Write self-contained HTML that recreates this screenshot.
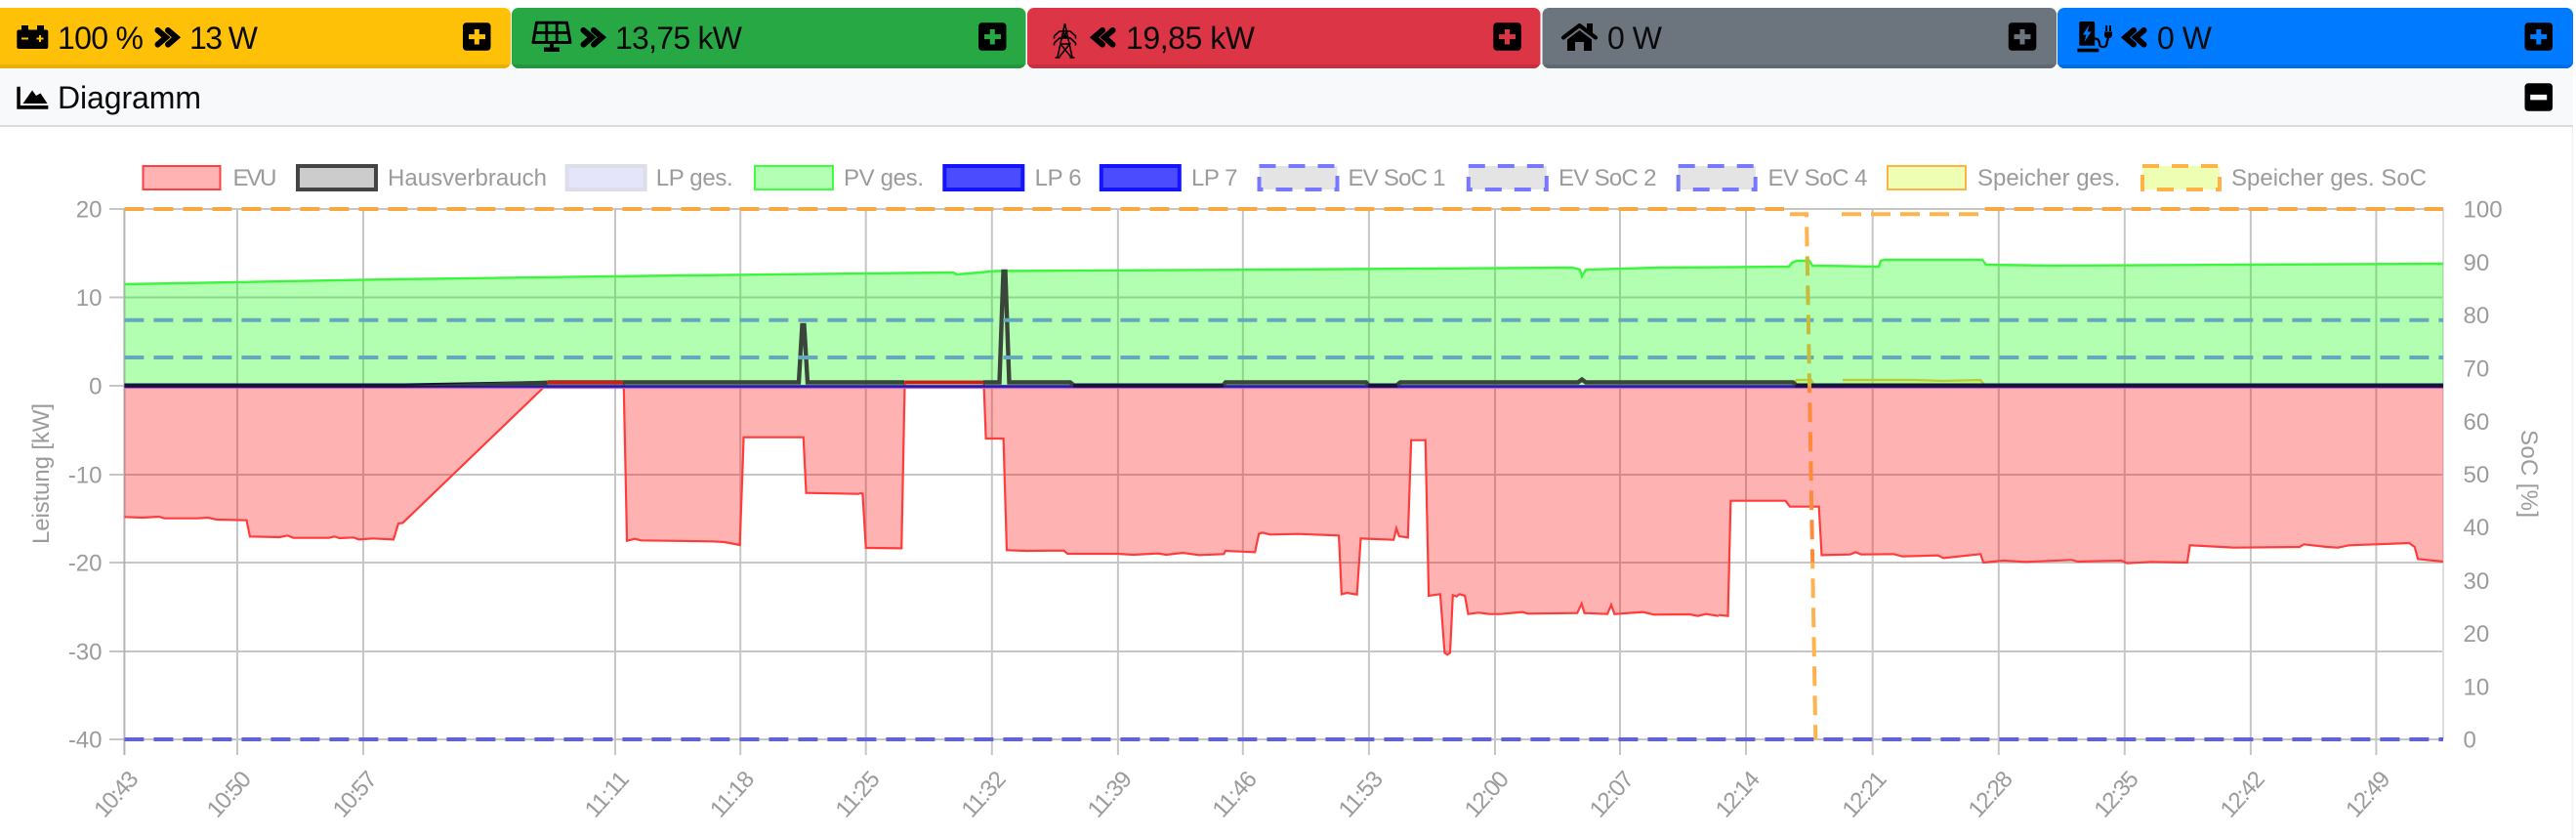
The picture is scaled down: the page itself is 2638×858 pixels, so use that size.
<!DOCTYPE html>
<html lang="de"><head><meta charset="utf-8"><title>Diagramm</title>
<style>
html,body{margin:0;padding:0;background:#fff;width:2638px;height:858px;overflow:hidden}
svg{display:block}
text{font-family:"Liberation Sans",Arial,sans-serif}
.h{font-size:32px;fill:#0a0a0a}
.l{font-size:24px;fill:#9b9b9b}
.ns{vector-effect:non-scaling-stroke}
</style></head><body>
<svg xmlns="http://www.w3.org/2000/svg" width="2638" height="858" viewBox="0 0 2638 858">
<!-- header cards -->
<rect x="0" y="70" width="2635" height="60" fill="#f8f9fa"/>
<rect x="0" y="128" width="2635" height="2" fill="#dcdcdc"/>
<rect x="2633.5" y="130" width="1.5" height="728" fill="#f0f0f0"/>
<rect x="-8" y="8" width="531" height="62" rx="7" fill="#ffc107"/>
<path d="M-8,66H523V63a7,7 0 0 1-7,7H0z" fill="#e8b006"/>
<rect x="524" y="8" width="526.5" height="62" rx="7" fill="#28a745"/>
<path d="M524,63V66H1050.5V63a7,7 0 0 1-7,7H531a7,7 0 0 1-7-7z" fill="#24963e"/>
<rect x="1052" y="8" width="525.5" height="62" rx="7" fill="#dc3545"/>
<path d="M1052,63V66H1577.5V63a7,7 0 0 1-7,7H1059a7,7 0 0 1-7-7z" fill="#c6303e"/>
<rect x="1579.5" y="8" width="526.5" height="62" rx="7" fill="#6c757d"/>
<path d="M1579.5,63V66H2106V63a7,7 0 0 1-7,7H1586.5a7,7 0 0 1-7-7z" fill="#616970"/>
<rect x="2107" y="8" width="528" height="62" rx="7" fill="#007bff"/>
<path d="M2107,63V66H2635V63a7,7 0 0 1-7,7H2114a7,7 0 0 1-7-7z" fill="#006fe6"/>

<!-- plus / minus buttons -->
<rect x="474" y="23.3" width="28.5" height="28.5" rx="3.5" fill="#000"/><path d="M480,37.6H497M488.3,30V45.5" stroke="#ffc107" stroke-width="5"/>
<rect x="1002" y="23.3" width="28.5" height="28.5" rx="3.5" fill="#000"/><path d="M1008,37.6H1025M1016.3,30V45.5" stroke="#28a745" stroke-width="5"/>
<rect x="1529.3" y="23.3" width="28.5" height="28.5" rx="3.5" fill="#000"/><path d="M1535,37.6H1552M1543.5,30V45.5" stroke="#dc3545" stroke-width="5"/>
<rect x="2056.8" y="23.3" width="28.5" height="28.5" rx="3.5" fill="#000"/><path d="M2062.5,37.6H2079.5M2071,30V45.5" stroke="#6c757d" stroke-width="5"/>
<rect x="2585.5" y="23.3" width="28.5" height="28.5" rx="3.5" fill="#000"/><path d="M2591.2,37.6H2608.2M2599.8,30V45.5" stroke="#007bff" stroke-width="5"/>
<rect x="2585.5" y="85.3" width="28.5" height="28.5" rx="3.5" fill="#000"/><path d="M2591.2,99.6H2608.2" stroke="#f8f9fa" stroke-width="5.5"/>

<!-- battery -->
<path d="M22,26h7v4.5h-7zM38,26h7v4.5h-7z" fill="#000"/><rect x="17.3" y="30.5" width="32" height="19.5" rx="2" fill="#000"/>
<path d="M22,39.5h7M37.5,39.5h7M41,36v7" stroke="#ffc107" stroke-width="2"/>
<text class="h" x="59" y="50" textLength="88">100 %</text>
<path d="M161.5,31L170,38.3L161.5,45.6M172,31L180.5,38.3L172,45.6" fill="none" stroke="#000" stroke-width="6" stroke-linecap="round" stroke-linejoin="miter"/>
<text class="h" x="194" y="50" textLength="70">13 W</text>

<!-- solar -->
<path d="M549.5,23.3H580.5L584,43.5H546Z" fill="none" stroke="#000" stroke-width="3" stroke-linejoin="round"/>
<path d="M547.5,33.5H582.5M559.8,23V44M570.2,23V44" stroke="#000" stroke-width="2.8"/>
<path d="M563,44h4v5h-4zM557,48.5h16v4.5h-16z" fill="#000"/>
<path d="M597.5,31L606,38.3L597.5,45.6M608,31L616.5,38.3L608,45.6" fill="none" stroke="#000" stroke-width="6" stroke-linecap="round" stroke-linejoin="miter"/>
<text class="h" x="630" y="50" textLength="130">13,75 kW</text>

<!-- tower -->
<path d="M1090.5,24L1083,58.5M1090.5,24L1098,58.5M1079.5,37L1085,32H1096L1101.5,37V39.5M1079.5,37V39.5M1079.5,44L1085,39H1096L1101.5,44V46.5M1079.5,44V46.5M1086.5,37.5H1094.5M1086,45H1095.5L1085,58M1086,45L1096.5,58M1088,32L1093,39M1093,32L1088,39M1080.5,59H1085.5M1095.5,59H1100.5" fill="none" stroke="#000" stroke-width="1.6"/>
<path d="M1139.5,31L1131,38.3L1139.5,45.6M1129,31L1120.5,38.3L1129,45.6" fill="none" stroke="#000" stroke-width="6" stroke-linecap="round" stroke-linejoin="miter"/>
<text class="h" x="1153" y="50" textLength="132">19,85 kW</text>

<!-- home -->
<path d="M1601,38.5L1617.5,26L1634,38.5" fill="none" stroke="#000" stroke-width="4.2" stroke-linecap="round" stroke-linejoin="round"/>
<path d="M1625,24h6v10h-6z" fill="#000"/>
<path d="M1605,40.5L1617.5,31L1630,40.5V52H1622V43H1613V52H1605Z" fill="#000"/>
<text class="h" x="1646" y="50" textLength="56">0 W</text>

<!-- charging -->
<path d="M2131,22H2143.5a1.7,1.7 0 0 1 1.7,1.7V46.7H2129.3V23.7a1.7,1.7 0 0 1 1.7-1.7Z" fill="#000"/>
<path d="M2139.5,25.5L2133,35.5H2136.5L2134.5,43L2141.5,32.5H2137.8Z" fill="#007bff"/>
<rect x="2127.3" y="49.7" width="22" height="3.6" fill="#000"/>
<path d="M2145,39.5C2150,39.5 2150,44 2150,45C2150,49 2157.5,49.5 2157.5,44.5C2157.5,42 2159,41 2159,37" fill="none" stroke="#000" stroke-width="2.2"/>
<path d="M2155,32.5H2163V36a3,3 0 0 1-3,3H2158a3,3 0 0 1-3-3ZM2156.2,26h2v6h-2zM2160,26h2v6h-2z" fill="#000"/>
<path d="M2195.5,31L2187,38.3L2195.5,45.6M2185,31L2176.5,38.3L2185,45.6" fill="none" stroke="#000" stroke-width="6" stroke-linecap="round" stroke-linejoin="miter"/>
<text class="h" x="2209" y="50" textLength="56">0 W</text>

<!-- Diagramm title -->
<path d="M17.3,88.7H20.8V108H49.3V111.7H17.3Z" fill="#000"/>
<path d="M23.5,106L33,92.5L37,98L41.5,95.5L48.5,106Z" fill="#000"/>
<text class="h" x="59" y="111" textLength="147">Diagramm</text>

<!-- legend -->
<g stroke-width="2">
<rect x="146.5" y="170" width="79" height="24" fill="#ffb3b3" stroke="#ff4040"/>
<rect x="773" y="170" width="80" height="24" fill="#b3ffb3" stroke="#40ff40"/>
<rect x="1933" y="170" width="80" height="24" fill="#eeffb3" stroke="#ffb347"/>
</g>
<g stroke-width="4">
<rect x="305" y="170" width="80" height="24" fill="#cccccc" stroke="#444444"/>
<rect x="580.6" y="170" width="80" height="24" fill="#e4e4fb" stroke="#dddde9"/>
<rect x="967.3" y="170" width="80" height="24" fill="#4c4cff" stroke="#1414ff"/>
<rect x="1127.8" y="170" width="80" height="24" fill="#4c4cff" stroke="#1414ff"/>
<rect x="1289.5" y="170" width="80" height="24" fill="#e4e4e4" stroke="#7878ff" stroke-dasharray="17 13"/>
<rect x="1503.8" y="170" width="80" height="24" fill="#e4e4e4" stroke="#7878ff" stroke-dasharray="17 13"/>
<rect x="1718.7" y="170" width="79" height="24" fill="#e4e4e4" stroke="#7878ff" stroke-dasharray="17 13"/>
<rect x="2194" y="170" width="79" height="24" fill="#eeffb3" stroke="#ffb347" stroke-dasharray="17 13"/>
</g>
<g class="l">
<text class="l" x="238.5" y="190" textLength="45">EVU</text>
<text class="l" x="397" y="190" textLength="163">Hausverbrauch</text>
<text class="l" x="671.7" y="190" textLength="79">LP ges.</text>
<text class="l" x="864" y="190" textLength="82">PV ges.</text>
<text class="l" x="1059.6" y="190" textLength="48">LP 6</text>
<text class="l" x="1220" y="190" textLength="47.5">LP 7</text>
<text class="l" x="1380.5" y="190" textLength="100">EV SoC 1</text>
<text class="l" x="1596" y="190" textLength="100.5">EV SoC 2</text>
<text class="l" x="1810.5" y="190" textLength="102">EV SoC 4</text>
<text class="l" x="2025" y="190" textLength="146.5">Speicher ges.</text>
<text class="l" x="2285" y="190" textLength="200">Speicher ges. SoC</text>
</g>

<!-- grid -->
<g stroke="#c6c6c6" stroke-width="2" fill="none">
<path d="M112,214H2502M112,304.5H2502M112,395H2502M112,486H2502M112,576H2502M112,667H2502M112,757H2502"/>
<path d="M243,214V773M372,214V773M630,214V773M758.2,214V773M886.7,214V773M1015.8,214V773M1144.9,214V773M1272.8,214V773M1401.9,214V773M1531,214V773M1659,214V773M1788,214V773M1917.7,214V773M2046.8,214V773M2175.8,214V773M2304.9,214V773M2433.4,214V773"/>
</g>
<path d="M127.4,214V773" stroke="#b4b4b4" stroke-width="2"/>
<path d="M2502,214V757" stroke="#dedede" stroke-width="2"/>

<!-- PV -->
<path d="M127.4,395V291L400,286L700,282L976,279L980,281L1020,277.5L1300,276L1610,274L1618,276L1620,283L1624,276L1700,274L1832,273L1835,269L1840,267L1853,267L1856,272L1924,273L1926,267L1930,266L2030,266L2034,271L2100,272L2300,271L2502,270V395Z" fill="rgba(0,255,0,.3)"/>
<path d="M127.4,291L400,286L700,282L976,279L980,281L1020,277.5L1300,276L1610,274L1618,276L1620,283L1624,276L1700,274L1832,273L1835,269L1840,267L1853,267L1856,272L1924,273L1926,267L1930,266L2030,266L2034,271L2100,272L2300,271L2502,270" fill="none" stroke="#3cf53c" stroke-width="2.4"/>

<!-- EVU fill + line, points in zoom coords -->
<g transform="translate(0,360) scale(0.5612245,0.3333333)">
<path fill="rgba(255,0,0,.3)" d="M227,105L227,508L260,510L290,507L300,512L360,512L380,510L395,516L450,518L456,568L510,570L525,565L535,572L600,572L610,568L620,573L645,571L655,577L680,574L718,577L727,528L735,526L995,105ZM1138,105L1144,581L1158,575L1170,580L1300,583L1322,585L1350,594L1357,263L1466,263L1471,434L1568,437L1568,105Z"/>
<path class="ns" fill="none" stroke="#ff3c3c" stroke-width="2.2" d="M227,508L260,510L290,507L300,512L360,512L380,510L395,516L450,518L456,568L510,570L525,565L535,572L600,572L610,568L620,573L645,571L655,577L680,574L718,577L727,528L735,526L995,105L1002,92L1138,92L1144,581L1158,575L1170,580L1300,583L1322,585L1350,594L1357,263L1466,263L1471,434L1568,437"/>
</g>
<g transform="translate(880,360) scale(0.5612245,0.3333333)">
<path fill="rgba(255,0,0,.3)" d="M0,105L0,435L6,436L12,603L77,604L83,105ZM227,105L231,267L263,267L269,610L305,612L373,611L380,621L470,621L500,624L545,620L560,624L590,618L620,625L665,622L668,612L722,616L729,560L735,556L750,562L800,560L875,565L880,745L890,741L908,746L915,574L975,578L980,543L985,567L1001,571L1007,272L1033,272L1039,750L1060,745L1068,925L1073,931L1078,925L1083,748L1090,752L1095,745L1105,750L1111,806L1130,802L1150,806L1170,806L1210,800L1220,805L1310,803L1318,774L1323,803L1365,806L1372,778L1378,806L1430,800L1450,808L1515,807L1530,812L1545,806L1568,812L1568,105Z"/>
<path class="ns" fill="none" stroke="#ff3c3c" stroke-width="2.2" d="M0,435L6,436L12,603L77,604L83,92L227,92L231,267L263,267L269,610L305,612L373,611L380,621L470,621L500,624L545,620L560,624L590,618L620,625L665,622L668,612L722,616L729,560L735,556L750,562L800,560L875,565L880,745L890,741L908,746L915,574L975,578L980,543L985,567L1001,571L1007,272L1033,272L1039,750L1060,745L1068,925L1073,931L1078,925L1083,748L1090,752L1095,745L1105,750L1111,806L1130,802L1150,806L1170,806L1210,800L1220,805L1310,803L1318,774L1323,803L1365,806L1372,778L1378,806L1430,800L1450,808L1515,807L1530,812L1545,806L1568,812"/>
</g>
<g transform="translate(1760,360) scale(0.5612245,0.3333333)">
<path fill="rgba(255,0,0,.3)" d="M0,105L0,809L17,812L22,458L122,458L130,476L183,476L188,625L240,623L250,616L260,623L320,622L335,629L400,626L410,634L478,622L483,648L520,642L560,646L645,640L655,645L735,642L745,650L790,646L855,648L860,595L940,602L1060,600L1068,592L1110,600L1130,602L1150,595L1260,588L1270,600L1276,637L1322,645L1322,105Z"/>
<path class="ns" fill="none" stroke="#ff3c3c" stroke-width="2.2" d="M0,809L17,812L22,458L122,458L130,476L183,476L188,625L240,623L250,616L260,623L320,622L335,629L400,626L410,634L478,622L483,648L520,642L560,646L645,640L655,645L735,642L745,650L790,646L855,648L860,595L940,602L1060,600L1068,592L1110,600L1130,602L1150,595L1260,588L1270,600L1276,637L1322,645"/>
</g>

<!-- Speicher -->
<path d="M1836,395L1840,389H1855L1858,395ZM1887,395V389H2030L2034,395Z" fill="rgba(200,255,0,.3)"/>
<path d="M1836,392L1840,389H1855L1858,395M1887,389H1960L1990,390L2028,389L2033,395" fill="none" stroke="#b9c83c" stroke-width="2.2"/>

<!-- baseline stack -->
<path d="M127.4,397.2H2502" stroke="#c862c0" stroke-width="1.8"/>
<path d="M127.4,395.6H2502" stroke="#1c1cb0" stroke-width="2.6"/>
<path d="M127.4,394.6H415L560,392M1099,394.6H1253M1401,394.6H1431M1838,394.6H2502" fill="none" stroke="#14143c" stroke-width="4.2"/>
<path d="M415,395L561,389.5V395Z" fill="#3c4a3c" opacity=".8"/>
<path d="M561,391.5H638M638,391.5H818L821.5,333H823.5L827,391.5H926M1007,391.5H1023.5L1027.5,278H1029.5L1033.5,391.5H1096L1099,394M1253,394L1255,391.5H1399L1401,394M1431,394L1434,391.5H1616L1620,388.5L1624,391.5H1836L1839,394" fill="none" stroke="#3a463a" stroke-width="4.4"/>
<path d="M561,391.5H638M926.5,391.5H1007" stroke="#cc1c1c" stroke-width="3.8"/>

<!-- SoC dashed lines -->
<path d="M127.4,327.7H2502M127.4,366H2502" fill="none" stroke="#64a8bc" stroke-width="4" stroke-dasharray="20 10"/>
<path d="M127.4,757H2502" fill="none" stroke="#6060e6" stroke-width="4" stroke-dasharray="20 10"/>
<path d="M127.4,214H1827" fill="none" stroke="#f8a840" stroke-width="4" stroke-dasharray="20 10"/>
<path d="M2032.7,214H2502" fill="none" stroke="#f8a840" stroke-width="4" stroke-dasharray="20 10"/>
<path d="M1886,219.3H2027" fill="none" stroke="#ffb24d" stroke-width="4" stroke-dasharray="20 10"/>
<clipPath id="c1"><rect x="1830" y="210" width="40" height="53"/></clipPath>
<clipPath id="c2"><rect x="1830" y="263" width="40" height="132"/></clipPath>
<clipPath id="c3"><rect x="1830" y="395" width="40" height="181"/></clipPath>
<clipPath id="c4"><rect x="1830" y="576" width="40" height="190"/></clipPath>
<g fill="none" stroke-width="4" stroke-dasharray="20 10">
<path clip-path="url(#c1)" d="M1833,219.3H1850L1859.3,757" stroke="#ffb24d"/>
<path clip-path="url(#c2)" d="M1833,219.3H1850L1859.3,757" stroke="#c4bc3a"/>
<path clip-path="url(#c3)" d="M1833,219.3H1850L1859.3,757" stroke="#ff8a3a"/>
<path clip-path="url(#c4)" d="M1833,219.3H1850L1859.3,757" stroke="#ffb24d"/>
</g>

<!-- y axis labels -->
<g text-anchor="end">
<text class="l" x="104.5" y="222.7">20</text>
<text class="l" x="104.5" y="313">10</text>
<text class="l" x="104.5" y="403.5">0</text>
<text class="l" x="104.5" y="494.5">-10</text>
<text class="l" x="104.5" y="584.5">-20</text>
<text class="l" x="104.5" y="675.5">-30</text>
<text class="l" x="104.5" y="765.5">-40</text>
</g>
<text class="l" transform="translate(50,557) rotate(-90)" textLength="144">Leistung [kW]</text>
<g>
<text class="l" x="2522.5" y="222.7">100</text>
<text class="l" x="2522.5" y="277">90</text>
<text class="l" x="2522.5" y="331">80</text>
<text class="l" x="2522.5" y="385.5">70</text>
<text class="l" x="2522.5" y="440">60</text>
<text class="l" x="2522.5" y="494">50</text>
<text class="l" x="2522.5" y="548">40</text>
<text class="l" x="2522.5" y="603">30</text>
<text class="l" x="2522.5" y="657">20</text>
<text class="l" x="2522.5" y="711.5">10</text>
<text class="l" x="2522.5" y="765.5">0</text>
</g>
<text class="l" transform="translate(2582,440) rotate(90)" textLength="90">SoC [%]</text>

<!-- x axis labels -->
<g text-anchor="end">
<text class="l" textLength="54" transform="translate(143,798.4) rotate(-48)">10:43</text>
<text class="l" textLength="54" transform="translate(258.5,798.4) rotate(-48)">10:50</text>
<text class="l" textLength="54" transform="translate(387.5,798.4) rotate(-48)">10:57</text>
<text class="l" textLength="54" transform="translate(645.5,798.4) rotate(-48)">11:11</text>
<text class="l" textLength="54" transform="translate(773.7,798.4) rotate(-48)">11:18</text>
<text class="l" textLength="54" transform="translate(902.2,798.4) rotate(-48)">11:25</text>
<text class="l" textLength="54" transform="translate(1031.3,798.4) rotate(-48)">11:32</text>
<text class="l" textLength="54" transform="translate(1160.4,798.4) rotate(-48)">11:39</text>
<text class="l" textLength="54" transform="translate(1288.3,798.4) rotate(-48)">11:46</text>
<text class="l" textLength="54" transform="translate(1417.4,798.4) rotate(-48)">11:53</text>
<text class="l" textLength="54" transform="translate(1546.5,798.4) rotate(-48)">12:00</text>
<text class="l" textLength="54" transform="translate(1674.5,798.4) rotate(-48)">12:07</text>
<text class="l" textLength="54" transform="translate(1803.5,798.4) rotate(-48)">12:14</text>
<text class="l" textLength="54" transform="translate(1933.2,798.4) rotate(-48)">12:21</text>
<text class="l" textLength="54" transform="translate(2062.3,798.4) rotate(-48)">12:28</text>
<text class="l" textLength="54" transform="translate(2191.3,798.4) rotate(-48)">12:35</text>
<text class="l" textLength="54" transform="translate(2320.4,798.4) rotate(-48)">12:42</text>
<text class="l" textLength="54" transform="translate(2448.9,798.4) rotate(-48)">12:49</text>
</g>
</svg>
</body></html>
